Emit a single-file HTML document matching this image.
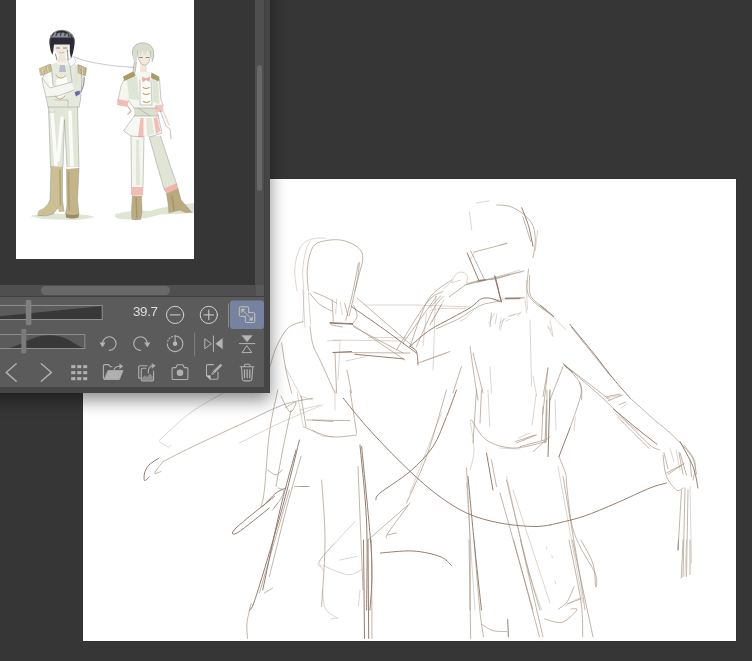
<!DOCTYPE html>
<html><head><meta charset="utf-8">
<style>
html,body{margin:0;padding:0;}
body{width:752px;height:661px;overflow:hidden;background:#363636;position:relative;font-family:"Liberation Sans",sans-serif;}
#canvas{position:absolute;left:83px;top:179px;width:653px;height:462px;background:#fff;box-shadow:0 0 1px rgba(0,0,0,.5);}
#sketch{position:absolute;left:0;top:0;width:752px;height:661px;}
#panel{position:absolute;left:-20px;top:-20px;width:290px;height:413px;background:#454545;box-shadow:0 7px 16px rgba(0,0,0,.46);}
#view{position:absolute;left:20px;top:20px;width:255px;height:285px;background:#363636;overflow:hidden;}
#thumb{position:absolute;left:16px;top:0;width:178px;height:259px;background:#fff;}
#vtrack{position:absolute;left:275px;top:20px;width:8.5px;height:285px;background:#4f4f4f;}
#vthumb{position:absolute;left:276.5px;top:84.5px;width:5.5px;height:126.5px;border-radius:3px;background:#686868;}
#htrack{position:absolute;left:20px;top:305px;width:255.5px;height:11px;background:#4f4f4f;}
#corner{position:absolute;left:275.5px;top:305px;width:8px;height:11px;background:#595959;}
#hthumb{position:absolute;left:61px;top:306px;width:129px;height:8.5px;border-radius:4.5px;background:#686868;}
#line1{position:absolute;left:20px;top:316px;width:264px;height:1px;background:#404040;}
#line2{position:absolute;left:283.5px;top:20px;width:.7px;height:297px;background:#404040;}
#tools{position:absolute;left:20px;top:317px;width:264px;height:90px;background:#5b5b5b;}
#ui{position:absolute;left:0;top:0;width:752px;height:661px;}
#zoomtxt{position:absolute;left:133px;top:304.3px;font-size:13.4px;line-height:15px;color:#dedede;letter-spacing:-.35px;will-change:transform;}
</style></head><body>
<div id="canvas"></div>
<svg id="sketch" viewBox="0 0 752 661" fill="none" stroke="#a08c7c" stroke-width="0.8" stroke-linecap="round" stroke-linejoin="round">
<!--SKETCH-->
<path stroke="#b8a99c" stroke-width=".8" opacity=".6" d="M297.0 290.8C296.6 287.4 294.5 276.8 294.7 270.4C294.9 264.0 296.5 256.9 298.2 252.2C299.9 247.5 302.0 244.3 305.0 242.0C308.0 239.7 312.9 238.8 316.3 238.2C319.7 237.6 323.9 238.2 325.4 238.2M302.7 322.6C302.9 317.7 303.8 301.7 303.8 293.0C303.8 284.3 302.3 277.6 302.7 270.4C303.1 263.2 304.7 254.9 306.0 250.0C307.3 245.1 309.8 242.4 310.6 240.9M308.4 293.0L310.6 324.8M336.7 298.7L335.6 313.5M340.1 302.2L342.4 314.6M327.6 340.7L341.3 340.7M368.5 337.3L407.0 337.8M345.8 361.0L366.0 356.6M285.0 366.5L303.0 400.0M366.6 305.0L418.0 305.0M418.0 305.0L470.0 307.0M340.0 343.0L338.0 380.0M333.0 340.0L400.0 341.0M423.0 361.5L446.5 353.0M435.5 296.5L433.0 370.0M426.5 313.0L423.0 346.0M476.3 203.0L488.8 200.9M537.6 230.4L535.3 250.8M469.5 212.0L471.8 230.0M475.0 252.0L469.5 260.0M478.0 282.0C481.7 281.0 492.7 277.7 500.0 276.0C507.3 274.3 518.3 272.7 522.0 272.0M526.2 280.3L527.4 309.8M443.8 288.4C445.1 287.3 449.2 284.5 451.3 282.0C453.4 279.5 454.7 275.1 456.6 273.5C458.6 271.9 461.2 271.9 463.0 272.4C464.8 272.8 466.6 274.4 467.2 276.2C467.8 278.0 466.8 282.0 466.7 283.1M451.3 282.6L460.4 280.3M430.0 310.2C431.9 309.9 435.8 308.9 441.7 308.6C447.6 308.3 461.2 308.4 465.1 308.4M459.8 321.4C461.0 320.7 464.7 319.2 467.2 317.1C469.7 315.0 473.4 310.0 474.7 308.6M466.5 283.0C469.8 282.5 477.6 282.2 486.5 280.0C495.4 277.8 514.4 271.7 520.0 270.0M488.8 323.4L494.5 313.2M500.1 330.2L503.5 318.9M508.0 316.6L514.9 314.3M517.2 315.5L521.7 312.0M547.8 325.7L551.2 330.2M491.5 313.0L490.0 326.5M500.0 245.0L506.6 243.0M500.0 298.0L525.0 298.0M525.0 300.0L526.6 313.0M500.0 323.0L506.0 318.0M510.0 316.0L520.0 313.0M606.6 398.0L623.0 395.0M550.0 320.0L553.0 336.5M530.0 320.0L531.6 386.5M533.0 376.0L536.6 396.0M553.0 316.5L566.0 330.0M222.8 393.3C217.3 396.6 200.5 405.2 190.0 413.0C179.5 420.8 164.7 435.5 159.6 440.0M159.6 441.5C161.0 442.4 166.1 446.4 168.0 447.0C169.9 447.6 170.5 445.3 171.0 445.0M322.7 405.0C315.6 408.0 293.9 416.7 280.0 423.0C266.1 429.3 246.2 439.7 239.5 443.0M297.0 392.0L303.0 425.0M312.7 430.0C314.2 431.0 318.6 434.9 322.0 436.0C325.4 437.1 331.2 436.5 333.0 436.6M441.5 413.0L410.0 493.0M300.0 410.0L320.0 405.0M300.0 396.0L313.0 400.0M335.0 390.0L335.0 410.0M355.0 521.5C349.2 527.9 325.6 552.6 320.0 560.0C314.4 567.4 321.3 565.0 321.6 566.0M340.0 560.0L356.6 556.5M466.5 483.0L475.0 610.0M518.0 438.0L530.0 433.0M488.0 390.0L489.7 426.6M513.0 490.0L550.0 603.0M470.0 420.0C470.7 425.0 474.0 441.7 474.0 450.0C474.0 458.3 470.7 466.7 470.0 470.0M616.0 414.0L638.0 431.0M621.7 407.6L627.0 403.5M670.0 448.0L674.0 462.0M676.0 450.0L680.0 470.0M690.0 486.5L691.5 563.0M575.4 417.0L574.0 430.7M500.0 448.0L520.0 449.0M506.6 476.5C509.9 490.9 520.8 540.8 526.6 563.0C532.4 585.2 539.1 602.2 541.6 610.0M558.0 466.5C560.2 478.8 567.3 517.2 571.5 540.0C575.7 562.8 581.1 592.5 583.0 603.0M565.0 606.5C566.7 605.4 572.2 601.4 575.0 600.0C577.8 598.6 580.4 598.3 581.5 598.0M555.0 400.0L556.0 430.0M536.0 395.0L532.0 425.0M251.0 604.0C251.3 604.3 253.2 605.2 253.0 606.0C252.8 606.8 250.5 608.5 250.0 609.0M322.5 590.0C323.0 593.2 323.0 604.3 325.5 609.0C328.0 613.7 335.5 616.5 337.5 618.0M337.5 618.0L331.0 619.0M334.0 543.5C331.7 546.4 321.8 556.1 320.0 560.7C318.2 565.3 322.9 569.3 323.5 571.0M323.7 566.0C327.8 567.4 341.6 574.0 348.0 574.6C354.4 575.2 359.5 570.3 361.8 569.4M360.0 590.0L358.5 606.0M686.5 540.0L684.8 576.0M546.5 547.0L547.0 549.0M551.7 555.0L552.5 558.0M555.0 581.0L556.0 584.0M303.0 290.0C303.2 293.3 303.7 303.8 304.0 310.0C304.3 316.2 304.8 324.2 305.0 327.0M490.0 366.5L491.5 393.0M491.5 313.0L490.0 326.5M497.0 314.0L495.0 324.0M501.0 318.0L499.5 328.0M506.0 321.0L510.0 319.0M493.0 300.0L520.0 299.0M546.8 409.0L545.4 441.6M548.0 327.2L552.3 335.4M432.0 322.0L443.8 300.0"/>
<path stroke="#a4917f" stroke-width=".85" opacity=".8" d="M308.4 290.8C308.2 287.4 306.8 276.8 307.2 270.4C307.6 264.0 308.9 256.8 310.6 252.2C312.3 247.6 313.4 245.1 317.4 243.0C321.4 240.9 329.4 239.9 334.5 239.7C339.6 239.5 343.9 240.5 348.0 242.0C352.1 243.5 356.9 246.0 359.4 248.8C361.9 251.6 363.0 254.3 362.8 259.0C362.6 263.7 359.6 271.9 358.3 277.2C357.0 282.5 355.5 288.5 354.9 290.8M358.3 263.6C357.4 268.5 354.7 283.6 352.6 293.0C350.5 302.4 346.9 315.8 345.8 320.3M359.4 262.4C359.0 265.6 358.7 272.8 357.0 281.7C355.3 290.6 350.5 310.1 349.2 315.8M309.5 293.0C311.2 294.9 315.9 301.4 319.7 304.4C323.5 307.4 330.1 310.1 332.2 311.2M314.0 292.0C316.5 293.1 325.0 296.8 328.8 298.7C332.6 300.6 335.4 302.5 336.7 303.3M332.2 299.9L333.3 321.4M344.7 303.3L348.0 315.8M352.6 323.7C353.4 322.4 357.0 318.8 357.2 315.8C357.4 312.8 354.3 307.2 353.7 305.5M331.0 324.8L342.4 327.0M303.0 321.5C300.5 322.6 292.4 323.8 288.0 328.0C283.6 332.2 279.6 340.1 276.6 346.5C273.6 352.9 271.1 363.2 270.0 366.5M281.6 343.0C282.3 347.5 284.3 361.7 286.0 370.0C287.7 378.3 290.7 389.2 291.6 393.0M310.0 326.5C310.5 329.6 311.3 339.4 313.0 345.0C314.7 350.6 316.3 352.0 320.0 360.0C323.7 368.0 332.5 387.5 335.0 393.0M357.0 298.0L413.0 346.5M350.0 323.0L405.0 360.0M353.0 326.5L403.0 353.0M333.0 352.5L410.0 353.0M335.0 353.0L336.6 393.0M347.0 370.0L351.5 393.0M396.5 350.0C401.5 342.2 418.8 312.8 426.5 303.0C434.2 293.2 440.2 293.4 443.0 291.5M403.0 343.0L436.5 296.5M416.5 346.5C419.2 340.4 428.6 318.3 433.0 310.0C437.4 301.7 441.3 298.8 443.0 296.5M410.0 346.5C413.0 338.8 421.1 311.1 428.0 300.0C434.9 288.9 447.6 283.3 451.5 280.0M418.0 363.0L450.0 351.5M496.7 205.0C499.0 205.2 505.8 204.9 510.3 206.5C514.9 208.1 520.2 211.3 524.0 214.5C527.8 217.7 531.1 221.3 533.0 225.8C534.9 230.3 535.3 236.4 535.3 241.7C535.3 247.0 533.4 255.0 533.0 257.6M522.8 216.8L530.8 241.7M474.0 252.0L507.0 243.5M470.6 250.8L484.2 279.0M478.6 280.3C481.6 279.9 489.1 279.6 496.7 278.0C504.3 276.4 519.5 272.0 524.0 270.8M505.8 298.0L524.0 297.8M528.5 269.0C528.3 272.8 526.3 285.9 527.4 291.6C528.5 297.3 530.9 298.8 535.3 303.0C539.6 307.2 550.5 314.3 553.5 316.6M529.6 275.8C529.8 279.2 528.0 290.3 530.8 296.0C533.6 301.7 544.0 307.5 546.6 309.8M465.0 284.8L485.4 280.3M436.4 328.8C440.3 327.0 453.8 321.4 459.8 318.2C465.8 315.0 468.7 312.0 472.6 309.7C476.5 307.4 479.7 305.6 483.2 304.4C486.7 303.1 491.0 302.8 493.8 302.2C496.6 301.6 499.0 301.2 500.0 301.0M449.1 296.9L465.1 285.2M466.7 284.7C468.4 284.1 473.7 281.8 476.8 281.0C479.9 280.2 482.1 280.3 485.3 279.9C488.5 279.5 491.9 279.7 496.0 278.8C500.1 277.9 507.7 275.3 510.0 274.6M630.0 398.0C634.1 401.6 647.6 413.9 654.4 419.8C661.2 425.7 666.2 429.3 670.7 433.4C675.2 437.5 679.8 442.5 681.6 444.3M571.3 327.2L610.8 376.3M563.0 363.0C565.8 366.3 576.9 376.8 580.0 383.0C583.1 389.2 581.3 397.2 581.6 400.0M564.6 365.0C568.5 368.0 580.4 377.2 588.0 383.0C595.6 388.8 606.3 397.2 610.0 400.0M548.0 368.0L543.0 396.5M563.0 366.5L550.0 400.0M312.7 398.3C307.7 399.4 294.3 400.8 282.7 405.0C271.1 409.2 257.8 416.4 242.8 423.3C227.8 430.2 206.1 440.2 192.8 446.6C179.5 453.0 168.0 459.1 163.0 461.6M163.0 461.6C161.6 463.5 154.9 471.4 154.6 473.0C154.3 474.6 159.9 471.8 161.0 471.5M277.7 390.0C276.3 397.2 271.6 416.3 269.4 433.0C267.2 449.7 265.8 477.8 264.4 490.0C263.0 502.2 261.6 503.8 261.0 506.5M291.0 410.0C289.6 416.7 285.2 437.2 282.7 450.0C280.2 462.8 277.1 480.4 276.0 486.5M267.7 470.0C269.1 470.8 273.6 475.0 276.0 475.0C278.4 475.0 281.0 470.8 282.0 470.0M277.7 503.0L272.7 510.0M278.0 488.0C279.0 488.5 283.7 489.0 284.0 491.0C284.3 493.0 281.7 497.2 280.0 500.0C278.3 502.8 275.0 506.7 274.0 508.0M301.0 456.5C298.5 465.4 291.3 490.0 286.0 510.0C280.7 530.0 272.2 565.4 269.4 576.5M289.4 490.0L259.4 593.0M264.4 593.0L272.7 588.0M294.4 486.5L309.4 486.5M301.0 396.5L306.0 426.5M312.7 420.0L333.0 421.6M281.0 396.0C282.5 398.7 287.5 411.0 290.0 412.0C292.5 413.0 296.8 402.7 296.0 402.0C295.2 401.3 286.8 407.0 285.0 408.0M446.5 390.0C443.2 401.1 433.2 437.8 426.5 456.6C419.8 475.4 409.8 495.3 406.5 503.0M408.0 505.0L368.0 540.0M410.0 503.0C406.3 508.0 391.8 527.2 388.0 533.0C384.2 538.8 387.3 537.2 387.2 538.0M387.2 535.0L396.5 533.0M306.6 420.0L350.0 420.6M303.0 426.6C307.5 428.3 321.1 435.2 330.0 436.6C338.9 438.0 352.2 435.3 356.6 435.0M350.0 390.0L356.6 433.0M358.0 466.5L363.0 590.0M321.6 480.0C322.2 490.0 325.0 518.9 325.0 540.0C325.0 561.1 322.2 595.4 321.6 606.5M300.0 486.5L308.0 486.5M466.5 468.0C467.1 480.0 469.4 516.3 470.0 540.0C470.6 563.7 470.0 598.3 470.0 610.0M471.5 420.0C474.0 423.3 479.6 435.3 486.5 440.0C493.4 444.7 503.0 447.7 513.0 448.0C523.0 448.3 540.9 442.7 546.5 441.6M516.5 443.0L536.5 435.0M520.0 446.6L544.7 440.0M533.0 451.6L550.0 436.6M481.5 390.0L480.0 423.0M476.5 390.0L473.0 443.0M491.5 460.0L496.5 486.5M547.0 390.0L546.5 440.0M506.5 480.0C509.8 493.8 520.9 541.3 526.5 563.0C532.1 584.7 537.8 602.2 540.0 610.0M500.0 493.0L533.0 610.0M681.6 444.3C683.4 446.6 690.0 453.0 692.5 458.0C695.0 463.0 695.9 471.6 696.6 474.3M563.0 364.0C566.0 366.5 574.2 373.3 580.8 379.0C587.4 384.7 595.8 391.7 602.6 398.0C609.4 404.3 614.0 409.3 621.7 417.0C629.4 424.7 642.6 438.8 649.0 444.3C655.4 449.8 658.0 448.9 659.8 449.8M617.6 417.0L649.0 448.4M606.7 396.7L620.3 394.0M608.0 400.8L621.7 395.3M619.0 404.8L625.8 402.0M663.0 455.0C663.6 458.6 664.2 470.7 666.5 476.5C668.8 482.3 673.8 488.1 676.5 490.0C679.2 491.9 681.9 488.3 683.0 488.0M666.5 473.0L681.5 465.0M680.0 453.0L686.5 475.0M690.0 460.0L691.5 476.5M684.0 445.0C685.8 447.8 693.5 456.2 695.0 462.0C696.5 467.8 693.3 477.0 693.0 480.0M681.5 490.0L678.0 550.0M685.0 488.0L683.0 576.5M688.0 490.0L686.5 576.5M678.5 540.0L678.0 550.0M579.5 383.0C579.7 385.1 582.4 387.8 580.8 395.3C579.2 402.8 571.8 422.6 570.0 428.0M559.0 456.6C560.1 459.6 564.6 469.9 565.9 474.3C567.1 478.7 565.6 474.9 566.5 483.0C567.4 491.1 569.2 512.4 571.5 523.0C573.8 533.6 576.1 538.2 580.0 546.5C583.9 554.8 592.2 566.3 595.0 573.0C597.8 579.7 596.2 584.2 596.5 586.5M543.0 406.6L541.6 440.0M546.6 400.0L545.0 443.0M515.0 441.6L535.0 435.0M563.0 476.5C565.8 493.2 576.3 554.2 580.0 576.5C583.7 598.8 584.2 604.4 585.0 610.0M251.0 604.0C250.3 607.2 247.6 617.2 247.0 623.0C246.4 628.8 247.5 635.9 247.6 638.5M371.5 540.0L372.0 638.5M469.0 540.0L470.7 638.5M474.0 540.0C474.9 551.5 478.1 592.9 479.7 609.0C481.3 625.1 482.9 632.2 483.5 636.8M482.5 624.7C484.2 625.7 488.8 629.5 492.8 630.6C496.8 631.8 504.4 631.4 506.7 631.6M513.6 540.0L539.5 636.8M520.5 540.0L543.0 636.8M569.0 540.0C571.0 550.3 578.7 585.9 581.0 602.0C583.3 618.1 582.4 631.0 582.7 636.8M572.4 540.0L593.0 636.8M581.0 540.0C583.0 544.0 590.6 556.2 593.0 564.0C595.4 571.8 595.1 582.9 595.5 586.7M574.0 586.7C572.8 589.2 569.6 598.3 567.0 602.0C564.4 605.7 559.9 607.8 558.5 609.0M567.0 604.0L581.0 598.8M544.7 618.8C547.6 619.4 556.6 623.8 562.0 622.3C567.4 620.8 575.4 612.2 576.9 610.0C578.4 607.8 572.0 609.2 571.0 609.0M678.5 540.0L678.0 550.0M683.0 540.0L681.3 578.0M690.0 540.0L690.0 574.6M470.0 346.5C470.7 351.2 472.7 366.1 474.0 375.0C475.3 383.9 477.3 395.8 478.0 400.0M473.0 353.0L483.0 393.0M461.5 366.5L453.0 393.0M548.0 368.0L542.7 414.4M678.9 452.5L683.0 474.3M663.9 452.5L668.0 468.8M668.0 474.3L684.3 463.4M430.0 307.6L440.6 295.9M430.0 324.6L441.7 304.4"/>
<path stroke="#8e7768" stroke-width="1" opacity=".95" d="M330.0 322.6L352.6 323.7M330.0 323.2L352.6 324.2M351.5 306.5C357.1 310.4 374.2 322.2 385.0 330.0C395.8 337.8 411.2 349.2 416.5 353.0M333.0 352.5L351.5 351.5M354.9 354.3L403.7 358.9M410.0 346.5C411.1 347.3 415.2 348.4 416.5 351.5C417.8 354.6 417.8 362.8 418.0 365.0M410.0 346.3C413.3 343.6 423.1 334.6 430.0 329.9C436.9 325.2 444.6 321.9 451.3 318.2C458.0 314.5 466.0 310.4 470.4 307.6C474.8 304.8 475.8 302.8 477.9 301.2C480.0 299.6 480.9 298.6 483.2 298.2C485.5 297.8 488.9 297.9 491.7 298.5C494.5 299.1 498.8 301.2 500.2 301.7M505.5 298.5L520.0 298.3M521.7 207.7C522.8 210.7 526.6 219.4 528.5 225.8C530.4 232.2 532.2 242.9 533.0 246.3M467.2 253.0L478.6 280.0M494.5 275.8L501.3 301.9M477.9 281.0L485.3 279.9M570.0 324.5C574.1 329.5 587.2 345.4 594.5 354.5C601.8 363.6 607.6 371.8 613.5 379.0C619.4 386.2 627.2 394.8 630.0 398.0M159.0 458.0C157.3 459.2 151.4 462.5 149.0 465.0C146.6 467.5 145.3 470.4 144.6 473.0C143.9 475.6 143.8 479.9 144.6 480.5C145.4 481.1 148.8 477.2 149.6 476.5M262.7 506.5C264.9 504.2 272.1 496.1 276.0 493.0C279.9 489.9 284.3 488.8 286.0 488.0M274.4 496.5C268.0 501.8 242.1 522.0 236.0 528.0C229.9 534.0 232.2 535.8 237.8 532.5C243.4 529.2 264.1 512.1 269.4 508.0M299.4 440.0C296.6 451.1 289.9 480.4 282.7 506.5C275.5 532.6 261.6 579.2 256.0 596.5C250.4 613.8 250.5 607.8 249.4 610.0M296.0 450.0C293.3 460.0 285.6 486.7 280.0 510.0C274.4 533.3 265.6 576.7 262.7 590.0M343.3 398.3C347.2 403.0 357.2 416.1 366.6 426.6C376.1 437.2 388.9 450.8 400.0 461.6C411.1 472.4 421.9 482.9 433.0 491.5C444.1 500.1 455.3 507.8 466.5 513.0C477.7 518.2 488.9 520.8 500.0 523.0C511.1 525.2 524.7 526.2 533.0 526.5C541.3 526.8 547.2 525.2 550.0 525.0M456.5 390.0C454.8 394.4 450.4 407.2 446.5 416.6C442.6 426.0 439.1 437.5 433.0 446.6C426.9 455.8 418.8 463.8 410.0 471.5C401.2 479.2 385.7 488.2 380.0 493.0C374.3 497.8 376.7 498.8 376.0 500.0M380.5 553.0C385.9 552.7 403.1 550.4 413.0 551.0C422.9 551.6 433.6 554.1 440.0 556.5C446.4 558.9 449.6 564.0 451.5 565.5M360.0 445.0C361.1 458.0 365.5 495.5 366.6 523.0C367.7 550.5 366.6 595.5 366.6 610.0M361.6 446.6C363.3 464.9 370.2 529.3 371.6 556.5C373.0 583.7 370.3 601.1 370.0 610.0M468.0 476.5C469.0 487.1 471.8 517.8 474.0 540.0C476.2 562.2 480.2 598.3 481.5 610.0M486.5 453.0L493.0 490.0M550.0 525.0C555.5 523.6 571.9 520.2 583.0 516.5C594.1 512.8 605.3 507.8 616.5 503.0C627.7 498.2 641.7 491.3 650.0 488.0C658.3 484.7 663.8 483.8 666.5 483.0M564.5 365.4L572.7 372.2M613.5 409.0C617.1 412.0 627.8 421.1 635.0 427.0C642.2 432.9 653.3 441.4 657.0 444.3M680.0 441.6C682.2 445.8 690.0 458.9 693.0 466.6C696.0 474.3 697.2 484.4 698.0 488.0M570.0 428.0L559.0 456.6M550.0 390.0L548.0 456.5M363.5 540.0L364.5 638.5M368.0 540.0L368.7 638.5M507.7 619.5L508.4 636.8M540.0 305.4L553.6 316.3M495.4 276.7L501.3 301.7"/>
</svg>
<div id="panel">
 <div id="view"><div id="thumb">
 <svg id="art" width="178" height="259" viewBox="16 0 178 259">
 <!--ART-->
<defs><filter id="sf" x="-5%" y="-5%" width="110%" height="110%"><feGaussianBlur stdDeviation="0.45"/></filter></defs>
<g stroke-linecap="round" stroke-linejoin="round" filter="url(#sf)">
<!-- ground shadows -->
<path d="M30 216 Q45 212 62 214 Q80 213 95 217 Q80 221 60 219.5 Q42 220 30 216Z" fill="#dfe5d3"/>
<path d="M116 214 Q130 210 150 211 Q165 206 194 203 V213 Q175 214 160 214.5 Q140 221 120 219 Q112 217 116 214Z" fill="#dfe5d3"/>
<!-- FIGURE 1 -->
<!-- pants -->
<path d="M48.5 107 L77.5 107 L79 167 L67 167 L64.5 122 L63 167 L50.5 167 Z" fill="#e1e6d6"/>
<path d="M52 112 L56 165 M62 118 L58 160 M70 112 L72 165" stroke="#fff" stroke-width="3.5" fill="none" opacity=".85"/>
<!-- boots -->
<path d="M51 166 L62.5 167 L62.5 200 L64 211.5 L59 212 L58 208 L53 214 Q45 217 38 215.5 Q36.5 213 39 211 Q47 208 50 200 Z" fill="#cbbf93"/>
<path d="M66.5 169 L79 168 L77.5 200 L79 214 Q78 218 72 218 Q66 218 65.5 214 L67 205 Z" fill="#c3b587"/>
<path d="M66 214 Q72 216 79 214 L78.5 217.5 Q72 219.5 66 217.5Z" fill="#9c8a62"/>
<path d="M60 170 L60.5 205 M68.5 172 L69 210" stroke="#a4966c" stroke-width="1.6" fill="none" opacity=".7"/>
<!-- jacket -->
<path d="M47 66 L58 62 L70 62 L80 66 L82 80 L80.5 100 L79 107 L48 107 L46 92 L42 80 Z" fill="#e6eadd"/>
<path d="M44 78 L50 70 L54 88 L47 96 Z M56 80 L66 76 L70 90 L58 100 Z" fill="#fff" opacity=".9"/>
<path d="M42 78 L47 74 L50 88 L62 84 L72 82 L74 90 L58 96 L46 97 Z" fill="#f4f6ef"/>
<path d="M75 66 L80 68 L81 90 L76 96 L74 80 Z" fill="#dfe4d4"/>
<!-- epaulettes -->
<path d="M39.5 68.5 L50.5 64 L52 71 L41 75.5 Z" fill="#c9b987"/>
<path d="M78 64.5 L86.5 68 L85.5 76 L78.5 73 Z" fill="#c0ae7c"/>
<path d="M42 68 L43.5 74.5 M44.5 67 L46 73.5 M47 66 L48.5 72.5 M80.5 66 L80 73 M83 67 L82.5 74.5" stroke="#e9dfb8" stroke-width=".8" fill="none"/>
<!-- blue accent -->
<path d="M79 73 L84.5 76 L83.5 86 L80 93 L75 94.5 L76.5 84Z" fill="#e3e8d8"/>
<path d="M84.3 77.5 Q84.5 86 80.8 92" stroke="#6a68b0" stroke-width="1" fill="none" opacity=".8"/>
<path d="M74.6 92 L79.6 90.5 L80 94 L76 96.5Z" fill="#5c5aa6" opacity=".9"/>
<!-- collar / cravat -->
<path d="M57 62 L63 70 L69 62 L66 58 L60 58Z" fill="#f2f2ee"/>
<path d="M60 65 L65 65 L66 72 L59 72Z" fill="#b9bcc4"/>
<!-- glove hand -->
<path d="M68 60 L74 56 L76 62 L71 67Z" fill="#fafafa" stroke="#bbb" stroke-width=".5"/>
<!-- gold arcs -->
<path d="M55.8 75.3 Q60.5 81 65.8 75.7" stroke="#c8ab74" stroke-width="1" fill="none"/>
<path d="M55.4 96.2 Q60 102.5 65 96" stroke="#c8ab74" stroke-width="1" fill="none"/>
<!-- neck, face -->
<path d="M58.5 54 L65.5 54 L66 62 L58 62Z" fill="#efe6d8"/>
<path d="M53.5 40 L69.5 40 Q70 50 65 54.5 Q61.5 57 58 54.5 Q53 50 53.5 40Z" fill="#f1e9dc"/>
<!-- hair -->
<path d="M49.8 44 Q48.5 34 57 31 Q62 29.2 68 31.5 Q75.5 35 74.3 44 Z" fill="#8b8f96"/>
<path d="M52 36 L54 33 M56 35.5 L58 31.5 M60.5 35 L61.5 31 M65 35.5 L65 31.5 M69 36.5 L68 33 M72 38 L70.5 35" stroke="#3a3c44" stroke-width="1.3"/>
<path d="M57 32.5 Q62 30.5 67 33" stroke="#262a3c" stroke-width="1.6" fill="none"/>
<path d="M49.5 44 Q49 40 50.5 37.5 L74 37.5 Q75 41 74.3 46 Q73.5 53 71 58.5 L69.8 52 L69.8 44.5 L54 44.5 L53.3 51 L52.3 55 Q50 50 49.5 44Z" fill="#2a2c38"/>
<path d="M49.8 43 Q48.6 34 57 31 Q62 29.2 68 31.5 Q75.5 35 74.4 44" stroke="#6a6450" stroke-width=".7" fill="none"/>
<path d="M55.5 54 L57 60 M67.5 50 L68 60" stroke="#555" stroke-width=".7" fill="none"/>
<path d="M56.5 48 L59.5 48 M63.5 48 L66.5 48" stroke="#555" stroke-width=".7"/>
<path d="M59.5 52.5 Q61.5 53.5 63.5 52.5" stroke="#a88" stroke-width=".5" fill="none"/>
<!-- string -->
<path d="M75.5 57.5 Q95 65 135 67.5" stroke="#cccccc" stroke-width="1.3" fill="none"/>
<!-- outlines fig1 -->
<g stroke="#8f8f8f" stroke-width=".55" fill="none" opacity=".85">
<path d="M47 66 L42 80 L46 97 L48 107 M80 66 L82 80 L80.5 100 L79 107 M48.5 107 L50.5 167 M77.5 107 L79 167 M64.5 120 L63 167 M64.5 120 L67 167 M48 107 L79 107"/>
<path d="M42 78 L50 88 L72 82 M46 97 L58 96 L74 90 M52 72 L53 86 M70 66 L72 82"/>
<path d="M51 166 L50 200 Q47 208 39 211 M62.5 167 L62.5 200 L64 211.5 M66.5 169 L67 205 L65.5 214 M79 168 L77.5 200 L79 214 M38 215.5 Q46 217 53 214 L58 208"/>
<path d="M39.5 68.5 L50.5 64 L52 71 L41 75.5Z M78 64.5 L86.5 68 L85.5 76 L78.5 73Z"/>
<path d="M55 100 L68 100 L68 106 M49 112 L54 112"/>
</g>
<!-- FIGURE 2 -->
<!-- legs -->
<path d="M131 136 L144 136 L143 187 L131.5 187 Z" fill="#f3f5ee"/>
<path d="M136 140 L139 140 L140 185 L136 185Z" fill="#e1e6d6"/>
<path d="M149 136 L160.5 136 L170 165 L177 185 L164.5 190 L157 165 Z" fill="#e0e5d6"/>
<!-- pink cuffs -->
<path d="M131 187 L143.3 187 L143 195.5 L131 195Z" fill="#f1bdb4"/>
<path d="M164 188.5 L176.5 183.5 L178.5 188.5 L166.5 194Z" fill="#efb4ac"/>
<!-- boots -->
<path d="M132.5 195.5 L141.5 196 L142 212 L140.5 219.5 Q136 221 132 219.5 L131.5 210 Z" fill="#bcae80"/>
<path d="M166.5 193.5 L178 188.5 L181 200 L192 212.5 L186 213 L180 210.5 L169 213 L168 203Z" fill="#b8aa7c"/>
<path d="M136 198 L137 218 M172 196 L174 210" stroke="#968860" stroke-width="1.5" opacity=".6" fill="none"/>
<!-- skirt -->
<path d="M135 115 L158 115 L162 133 L150 137 L143 137 L131 136 L123.5 131 Z" fill="#f7f8f3"/>
<path d="M140.5 118 L143.5 118 L143.5 137 L138 137Z" fill="#f1bdb4"/>
<path d="M153.5 118 L157 117 L160.5 131 L156 134Z" fill="#f1bdb4"/>
<path d="M146 118 L152 118 L154 134 L147 136Z" fill="#e3e8d8"/>
<!-- jacket -->
<path d="M125 78 L137 72 L152 72 L159.5 79 L161 100 L158 108 L134 108 L128 100 L118 100 L121 86 Z" fill="#f4f6ef"/>
<path d="M127 80 L137 76 L139 100 L129 99 Z M152 78 L158 82 L159.5 104 L153 102Z" fill="#dfe5d4"/>
<path d="M140 80 L151 80 L152 105 L140 105Z" fill="#fbfbf8"/>
<!-- belt -->
<path d="M134 108 L158 108 L158.5 116 L134.5 116Z" fill="#d9dfcc"/>
<!-- cuffs -->
<path d="M117.5 99 L128.5 101 L128 107 L117 105Z" fill="#f1bdb4"/>
<path d="M155 105 L163 104.5 L163.5 112 L155.5 112Z" fill="#f3c6be"/>
<!-- epaulettes -->
<path d="M123 76.5 L134 71 L135.5 76 L124.5 81Z" fill="#a99c66"/>
<path d="M151.5 72.5 L159.5 77 L158.5 81.5 L151 78Z" fill="#a99c66"/>
<!-- bow -->
<path d="M142 76.5 L146 78.5 L150 76.5 L149.5 82 L146 80 L142.5 82.5Z" fill="#f0aca4"/>
<!-- gold bars -->
<path d="M143.2 87.5 Q146 89.5 149.3 87.5 M143.2 93.5 Q146 95.5 149.3 93.5 M143.5 101.5 Q146.5 103.5 149.5 101.5" stroke="#bfa060" stroke-width="1.1" fill="none"/>
<!-- neck/face/hair -->
<path d="M140.5 63 L146.5 63 L147 72 L140 72Z" fill="#efe6d8"/>
<path d="M132.5 55 Q131 45 140 43 Q150 41.5 153.5 50 Q155 57 152 62 L150 52 L138 51 L136.5 62 Q135.5 70 135 73 L133 72 Q133.5 66 134.5 62 Q132.5 59 132.5 55Z" fill="#d9ddce"/>
<path d="M137.5 51 L150.5 51.5 Q151 60 147.5 64 Q144.5 66.5 141.5 64 Q137.5 60 137.5 51Z" fill="#f1e9dc"/>
<path d="M137.5 50 L141 56 L142 50 L145 55.5 L146.5 50 L150.5 54 L150.5 49 L138 48Z" fill="#d9ddce"/>
<path d="M139.5 57.5 L142.5 57.5 M146 57.5 L149 57.5" stroke="#666" stroke-width=".7"/>
<!-- arm / hand right -->
<path d="M160 110 L166 126 L170 129 L171 139" stroke="#9a9a9a" stroke-width=".6" fill="none"/>
<path d="M163 111 L169 125" stroke="#f0d8cc" stroke-width="1.6" fill="none"/>
<path d="M128.5 107 L131 111 L128 114" stroke="#d8b8a8" stroke-width="1.4" fill="none"/>
<!-- outlines fig2 -->
<g stroke="#8f8f8f" stroke-width=".55" fill="none" opacity=".85">
<path d="M132.5 55 Q131 45 140 43 Q150 41.5 153.5 50 Q155 57 152 62 M137.5 51 Q137.5 60 141.5 64 Q144.5 66.5 147.5 64 Q151 60 150.5 51.5"/>
<path d="M134.5 62 Q133.5 66 133 72 M136.5 62 Q135.5 70 135 73"/>
<path d="M125 78 L121 86 L118 100 M128 100 L134 108 M159.5 79 L161 100 L163 105 M140 80 L140 105 L152 105 L151 80"/>
<path d="M135 115 L123.5 131 L131 136 L143 137 M158 115 L162 133 L150 137"/>
<path d="M131 136 L131.5 187 M144 136 L143 187 M149 136 L157 165 L164.5 190 M160.5 136 L170 165 L177 185"/>
<path d="M132.5 195.5 L131.5 210 L132 219.5 M141.5 196 L142 212 L140.5 219.5 M166.5 193.5 L168 203 L169 213 M178 188.5 L181 200 L192 212.5"/>
<path d="M134 108 L158 108 M134.5 116 L158.5 116 M138 108 L150 116"/>
</g>
</g>
</svg></div></div>
 <div id="vtrack"></div><div id="vthumb"></div>
 <div id="htrack"></div><div id="corner"></div><div id="hthumb"></div>
 <div id="line1"></div><div id="line2"></div>
 <div id="tools"></div>
</div>
<div id="zoomtxt">39.7</div>
<svg id="ui" viewBox="0 0 752 661" fill="none" stroke="#b4b4b4" stroke-width="1.1" stroke-linecap="round" stroke-linejoin="round">
<!--UI-->
<!-- slider 1 -->
<g stroke="none">
<path d="M-33 319.5 L102 306 L102 319.5 Z" fill="#383838"/>
<rect x="-40" y="305" width="142.5" height="1" fill="#8e8e8e"/>
<rect x="-40" y="319" width="142.5" height="1" fill="#8e8e8e"/>
<rect x="101.7" y="305" width="1" height="15" fill="#8e8e8e"/>
<rect x="26.2" y="300.3" width="4.8" height="24.4" rx="1.2" fill="#7f7f7f" stroke="#8c8c8c" stroke-width=".6"/>
<!-- slider 2 -->
<path d="M6 348.5 C22 346 30 335.5 50 335.2 C68 335.5 72 344 85 348.5 Z" fill="#383838"/>
<rect x="-40" y="334" width="125" height="1" fill="#8e8e8e"/>
<rect x="-40" y="348" width="125" height="1" fill="#8e8e8e"/>
<rect x="84.3" y="334" width="1" height="15" fill="#8e8e8e"/>
<rect x="21.3" y="329" width="5" height="24.4" rx="1.2" fill="#7b7b7b"/>
</g>
<!-- minus / plus -->
<g stroke="#d2d2d2" stroke-width="1">
<circle cx="175.1" cy="314.9" r="8.6"/><path d="M170.3 314.9 H180"/>
<circle cx="208.8" cy="314.9" r="8.6"/><path d="M204 314.9 H213.6 M208.8 310.1 V319.7"/>
</g>
<path d="M228.5 304 V327" stroke="#8a8a8a" stroke-width="1"/>
<!-- blue button -->
<rect x="230" y="300.5" width="34" height="28.5" rx="3" fill="#7683a0" stroke="none"/>
<g stroke="#c9c4b9" stroke-width="1" opacity=".95">
<path d="M245.3 316.4 H240.6 Q239.3 316.4 239.3 315.1 V308.1 Q239.3 306.8 240.6 306.8 H247.4 Q248.7 306.8 248.7 308.1 V312.6"/>
<path d="M248.7 312.6 H253.5 Q254.8 312.6 254.8 313.9 V321.2 Q254.8 322.5 253.5 322.5 H246.6 Q245.3 322.5 245.3 321.2 V316.4"/>
<path d="M242.3 309.8 L251.8 319.5" stroke-width=".9"/>
<path d="M241.6 312.2 V309.1 H244.7 Z M252.5 317.1 V320.2 H249.4 Z" fill="#c9c4b9" stroke-width=".5"/>
</g>
<!-- rotate left -->
<g stroke="#b6b6b6" stroke-width="1.1">
<path d="M102.5 343.6 A6.8 6.8 0 1 1 109.3 350.4"/>
<path d="M100.1 342.9 L102.5 347 L104.9 342.9 Z" fill="#b6b6b6" stroke-width=".5"/>
<path d="M147.3 343.6 A6.8 6.8 0 1 0 140.5 350.4"/>
<path d="M149.7 342.9 L147.3 347 L144.9 342.9 Z" fill="#b6b6b6" stroke-width=".5"/>
<!-- dial -->
<path d="M175.1 336 A7.8 7.8 0 1 1 167.3 343.8"/>
<path d="M167.7 341.3 A7.8 7.8 0 0 1 173.1 336.3" stroke-dasharray="1.1 1.8"/>
<path d="M175.1 335.6 V343.8"/>
<circle cx="175.1" cy="343.8" r="2.3" fill="#b6b6b6" stroke="none"/>
</g>
<path d="M194.7 333 V356" stroke="#828282" stroke-width="1"/>
<!-- flip h -->
<g stroke="#b6b6b6" stroke-width="1">
<path d="M205.1 339 L211.3 343.7 L205.1 348.4 Z"/>
<path d="M213.4 336 V351.4"/>
<path d="M222.4 338.6 L215.7 343.7 L222.4 348.8 Z" fill="#b6b6b6" stroke-width=".4"/>
<!-- flip v -->
<path d="M241.9 335.4 H252.3 L247.1 341.8 Z" fill="#b6b6b6" stroke-width=".4"/>
<path d="M239.3 343.6 H254.9"/>
<path d="M247.1 346 L251.8 352.6 H242.4 Z"/>
</g>
<!-- row 3 -->
<g stroke="#b0b0b0" stroke-width="1.4" stroke-linejoin="miter">
<path d="M16.2 363.8 L6.2 372.4 L16.2 381.2"/>
<path d="M41.3 363.8 L51.4 372.4 L41.3 381.2"/>
</g>
<g fill="#b0b0b0" stroke="none">
<rect x="71.2" y="365.1" width="4.2" height="3.1"/><rect x="77.2" y="365.1" width="4.2" height="3.1"/><rect x="83.2" y="365.1" width="4" height="3.1"/>
<rect x="71.2" y="371.1" width="4.2" height="3.1"/><rect x="77.2" y="371.1" width="4.2" height="3.1"/><rect x="83.2" y="371.1" width="4" height="3.1"/>
<rect x="71.2" y="377.1" width="4.2" height="3.1"/><rect x="77.2" y="377.1" width="4.2" height="3.1"/><rect x="83.2" y="377.1" width="4" height="3.1"/>
</g>
<!-- folder -->
<g stroke="#b0b0b0" stroke-width="1.1">
<path d="M104.5 379.3 Q103.4 379.3 103.4 377.8 V366 Q103.4 364.6 104.8 364.6 H108.6 L110.6 366.8 H112"/>
<path d="M108.3 370.6 H123 L119.3 379.5 H104.4 Z" fill="#b0b0b0" stroke-width=".8"/>
<path d="M114 370.5 Q114 366.4 120.5 366.3"/>
<path d="M119.8 363.9 L122.9 366.3 L119.8 368.7 Z" fill="#b0b0b0" stroke-width=".4"/>
</g>
<!-- image export -->
<g stroke="#b0b0b0" stroke-width="1.1">
<path d="M141 378.3 H140 Q138.7 378.3 138.7 377 V367 Q138.7 365.7 140 365.7 H147"/>
<path d="M146 368.2 H142.6 Q141.3 368.2 141.3 369.5 V379.6 Q141.3 380.9 142.6 380.9 H152.3 Q153.6 380.9 153.6 379.6 V371"/>
<path d="M142.2 380.2 V377.8 L144.8 375.2 L146.8 377 L149.8 373.8 L152.8 376.4 V380.2 Z" fill="#8c8c8c" stroke="none"/>
<path d="M148.3 373 Q148 366 153 365.8"/>
<path d="M152.2 363.4 L155.3 365.8 L152.2 368.2 Z" fill="#b0b0b0" stroke-width=".4"/>
</g>
<!-- camera -->
<g stroke="#b0b0b0" stroke-width="1.1">
<path d="M173.4 367.6 H176 L177.3 364.8 H182.9 L184.2 367.6 H186.6 Q187.9 367.6 187.9 368.9 V378.2 Q187.9 379.5 186.6 379.5 H173.4 Q172.1 379.5 172.1 378.2 V368.9 Q172.1 367.6 173.4 367.6 Z"/>
<circle cx="180" cy="372.8" r="3.3" fill="#b0b0b0" stroke="none"/>
</g>
<!-- edit -->
<g stroke="#b0b0b0" stroke-width="1.1">
<path d="M213.5 364.6 H207.9 Q206.5 364.6 206.5 366 V375.6 L210.3 379.3 H216.6 Q218 379.3 218 377.9 V372"/>
<path d="M206.8 375.6 H210.3 V379" stroke-width=".9"/>
<path d="M207 376 L210 379 V376 Z" fill="#c8c8c8" stroke="none"/>
<path d="M213.6 372.4 L221.4 364.6" stroke-width="2.6" stroke-linecap="butt"/>
<path d="M211.8 374.2 L212.4 372.2 L213.8 373.6 Z" fill="#b0b0b0" stroke-width=".5"/>
</g>
<!-- trash -->
<g stroke="#b0b0b0" stroke-width="1.1">
<path d="M240.3 366.7 H253.9"/>
<path d="M244.4 366.5 V365.4 Q244.4 364.3 245.5 364.3 H248.9 Q250 364.3 250 365.4 V366.5"/>
<path d="M241.5 367 L242.3 379 Q242.5 380.9 244.4 380.9 H249.8 Q251.7 380.9 251.9 379 L252.8 367"/>
<path d="M244.5 369.3 V378.2 M247.15 369.3 V378.2 M249.8 369.3 V378.2" stroke-width="1.3" stroke-linecap="butt"/>
</g>
</svg>
</body></html>
